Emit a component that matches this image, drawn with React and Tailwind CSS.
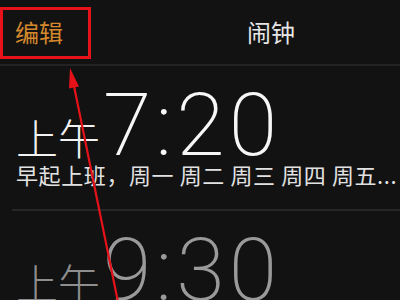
export default function App() {
  const cjk = { fontFamily: '"Noto Sans CJK SC", "Noto Sans", sans-serif' };
  const digits = { fontFamily: 'Roboto, "Noto Sans", sans-serif' };

  return (
    <div className="relative w-[400px] h-[300px] overflow-hidden bg-[#121212]" style={cjk}>
      {/* nav bar */}
      <div className="flex items-center h-[66px] border-b-2 border-[#232323]">
        <span className="pl-[15px] text-[24px] leading-none text-[#d4882c]">编辑</span>
        <span className="ml-auto mr-[105px] text-[24px] leading-none text-[#e6e6e6]">闹钟</span>
      </div>

      {/* first alarm */}
      <div className="pl-[16px] pt-[15px]">
        <div className="flex items-baseline">
          <span className="text-[42px] leading-none font-extralight text-[#f2f2f2]">上午</span>
          <span className="ml-[3px] text-[88px] leading-none font-extralight tracking-[4px] text-[#f7f7f7]" style={digits}>7:20</span>
        </div>
        <div className="-mt-[6px] text-[22px] leading-none tracking-[0.6px] text-[#e2e2e2] whitespace-nowrap">
          早起上班，周一 周二 周三 周四 周五...
        </div>
      </div>

      <div className="ml-[12px] mt-[24px] h-[2px] bg-[#262626]" />

      {/* second alarm, disabled */}
      <div className="pl-[16px] pt-[15px]">
        <div className="flex items-baseline">
          <span className="text-[42px] leading-none font-extralight text-[#8e8e8e]">上午</span>
          <span className="ml-[3px] text-[88px] leading-none font-extralight tracking-[4px] text-[#9a9a9a]" style={digits}>9:30</span>
        </div>
      </div>

      {/* annotation: red box and arrow */}
      <div className="absolute left-0 top-[7px] w-[91px] h-[52px] border-[3px] border-[#e5121a]" />
      <svg className="absolute inset-0" width="400" height="300" viewBox="0 0 400 300">
        <line x1="74" y1="86" x2="118" y2="302" stroke="#e5121a" strokeWidth="2.2" />
        <polygon points="70,68 79,86.6 69,88.6" fill="#e5121a" />
      </svg>
    </div>
  );
}
